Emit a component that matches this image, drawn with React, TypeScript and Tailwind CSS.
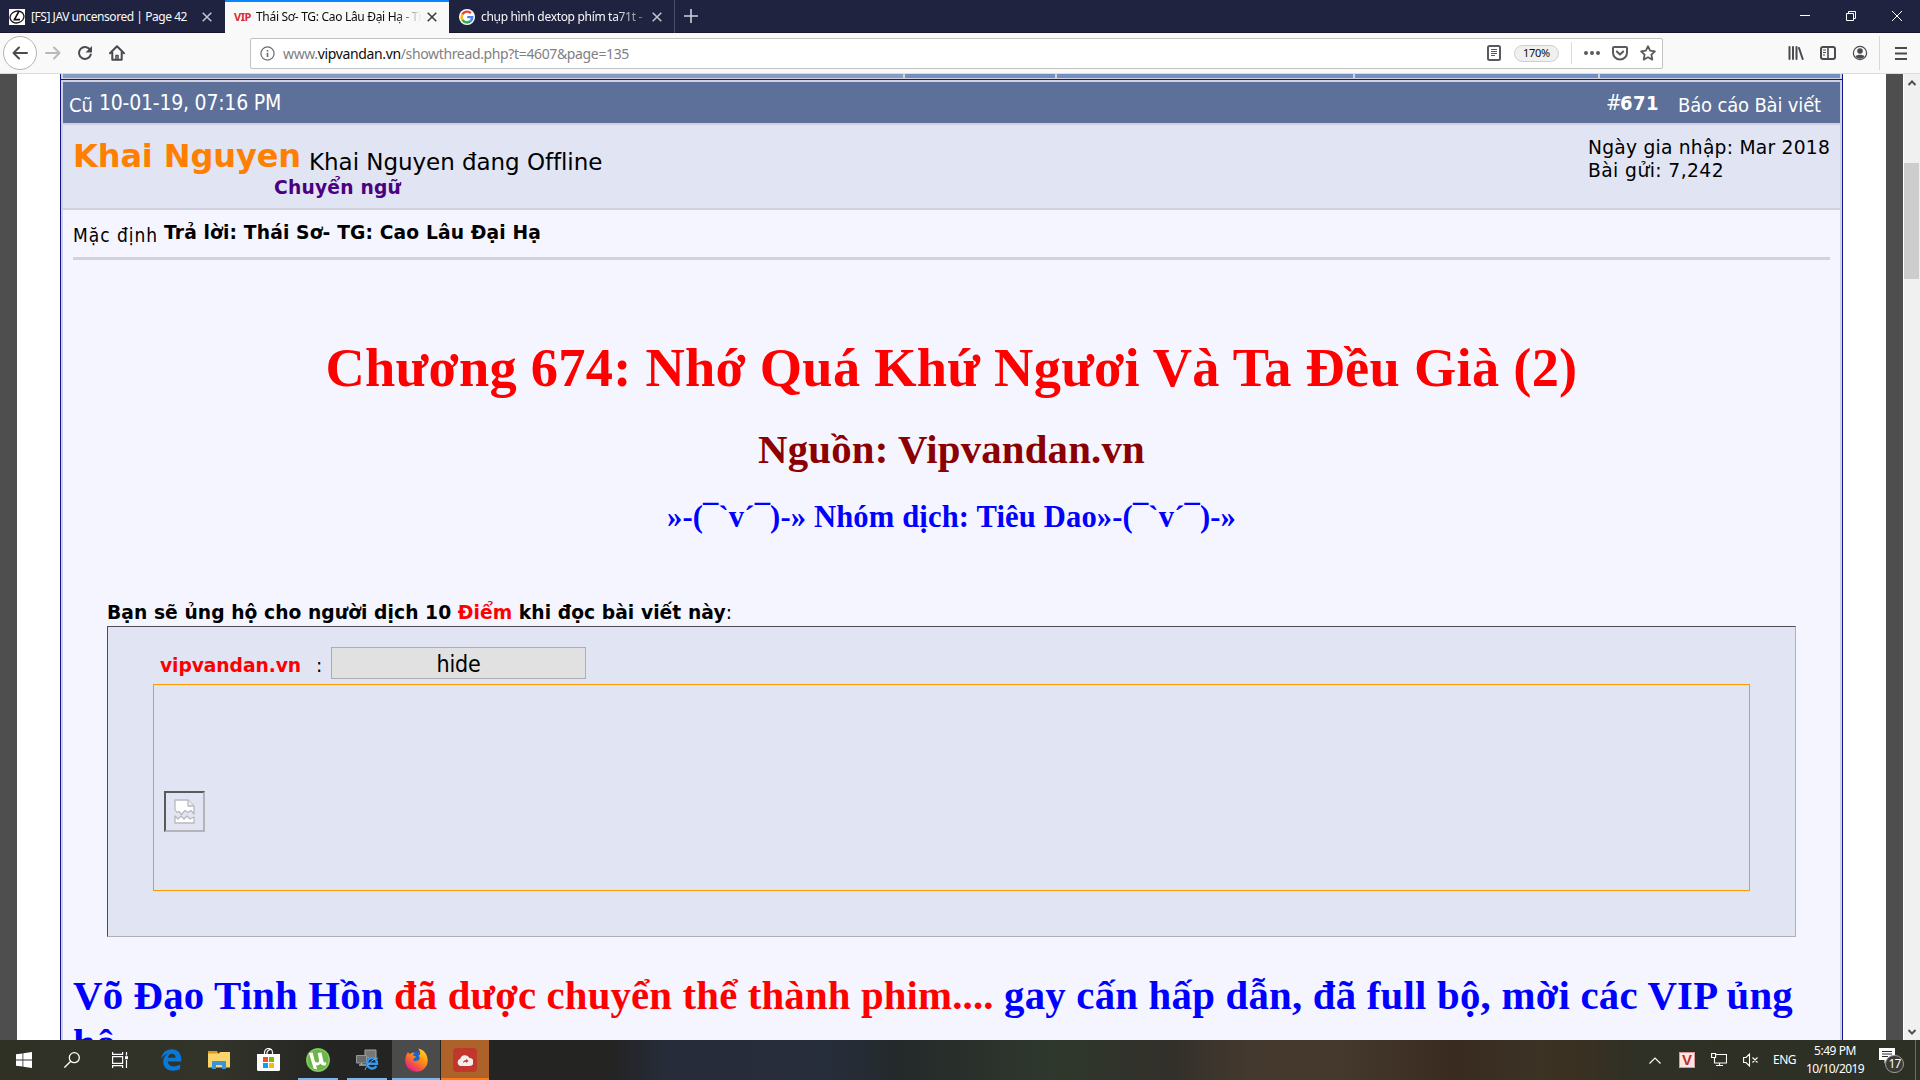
import { useLayoutEffect, useRef } from 'react';
import type { ReactNode } from 'react';

/** Inline text whose letter spacing is tuned so that it spans `w` pixels. */
function T({ w, className = '', children }: { w: number; className?: string; children: ReactNode }) {
  const ref = useRef<HTMLSpanElement>(null);
  useLayoutEffect(() => {
    const el = ref.current;
    if (!el) return;
    el.style.letterSpacing = '0px';
    const natural = el.getBoundingClientRect().width;
    const count = Math.max(1, (el.textContent || '').length);
    el.style.letterSpacing = `${(w - natural) / count}px`;
  }, [w]);
  return (
    <span ref={ref} className={`inline-block shrink-0 whitespace-pre ${className}`}>
      {children}
    </span>
  );
}

const UI = "font-['Noto_Sans','Open_Sans',sans-serif]";
const VERDANA = "font-['DejaVu_Sans',sans-serif]";
const TAHOMA = "font-['DejaVu_Sans_Condensed','DejaVu_Sans',sans-serif] [font-stretch:condensed]";

function Close({ className = '' }: { className?: string }) {
  return (
    <svg className={`h-[10px] w-[10px] shrink-0 ${className}`} viewBox="0 0 10 10" fill="none" stroke="currentColor" strokeWidth="1.5">
      <path d="M.7.7l8.6 8.6M9.3.7L.7 9.3" />
    </svg>
  );
}

function GoogleG() {
  return (
    <svg className="h-4 w-4 shrink-0" viewBox="0 0 16 16">
      <circle cx="8" cy="8" r="8" fill="#fff" />
      <g fill="none" strokeWidth="2.4">
        <path d="M3.4 5.3A5.4 5.4 0 0 1 11.9 4.2" stroke="#ea4335" />
        <path d="M3.4 5.3A5.4 5.4 0 0 0 3.4 10.8" stroke="#fbbc05" />
        <path d="M3.4 10.8A5.4 5.4 0 0 0 11.7 12" stroke="#34a853" />
        <path d="M8.2 8.1H13.3A5.3 5.3 0 0 1 11.6 12" stroke="#4285f4" />
      </g>
    </svg>
  );
}

function TabBar() {
  return (
    <div className={`flex h-[33px] border-b border-[#15172b] bg-[#202340] text-[12px] leading-[16px] text-[#f9f9fa] ${UI}`}>
      <div className="flex h-[33px] w-[225px] items-center pl-[9px]">
        <svg className="h-4 w-4 shrink-0" viewBox="0 0 16 16">
          <rect width="16" height="16" fill="#fff" />
          <ellipse cx="8" cy="8" rx="7" ry="5.9" fill="none" stroke="#111" strokeWidth="1.3" transform="rotate(-15 8 8)" />
          <path d="M9.8 2.5L5.4 10.6H11" fill="none" stroke="#111" strokeWidth="1.6" />
        </svg>
        <T w={156} className="mt-px ml-[6px]">[FS] JAV uncensored | Page 42</T>
        <Close className="ml-[15px] text-[#c5c6d0]" />
      </div>
      <div className="flex h-[33px] w-[224px] items-center border-t-2 border-[#0a84ff] bg-[#f9f9fa] pb-[2px] pl-[9px] text-[#0c0c0d]">
        <T w={17} className="text-[11px] font-bold text-[#d92a2e]">VIP</T>
        <div className="mt-px ml-[5px] w-[166px] overflow-hidden [mask-image:linear-gradient(to_right,black_84%,transparent)]">
          <T w={165}>Thái Sơ- TG: Cao Lâu Đại Hạ - Ti</T>
        </div>
        <Close className="ml-[5px] text-[#38383d]" />
      </div>
      <div className="flex h-[33px] w-[226px] items-center border-r border-[#4b4d66] pl-[10px]">
        <GoogleG />
        <div className="mt-px ml-[6px] w-[164px] [mask-image:linear-gradient(to_right,black_80%,rgba(0,0,0,.35))]">
          <T w={161}>chụp hình dextop phím ta71t -</T>
        </div>
        <Close className="ml-[7px] text-[#c5c6d0]" />
      </div>
      <svg className="mt-[9px] ml-[9px] h-[14px] w-[14px]" viewBox="0 0 14 14" stroke="#d0d1da" strokeWidth="1.6">
        <path d="M7 0v14M0 7h14" />
      </svg>
      <svg className="mt-[10px] mr-[5px] ml-auto h-3 w-[132px]" viewBox="0 0 132 12" fill="none" stroke="#fff" strokeWidth="1">
        <path d="M17 5.500h10M63.500 3.500h7v7h-7zM65.500 3.500v-2h7v7h-2M109 1l10 10M119 1l-10 10" />
      </svg>
    </div>
  );
}

function NavBar() {
  return (
    <div className={`flex h-[41px] items-center border-b border-[#dcdcdd] bg-[#f9f9fa] text-[#4a4a4f] ${UI}`}>
      <div className="ml-[3px] flex h-[34px] w-[34px] items-center justify-center rounded-full border border-[#b4b4b5] bg-white">
        <svg className="h-4 w-4" viewBox="0 0 16 16" fill="none" stroke="currentColor" strokeWidth="2" strokeLinecap="round" strokeLinejoin="round">
          <path d="M15 8H1.500M7 2.500L1.500 8L7 13.500" />
        </svg>
      </div>
      <svg className="ml-[8px] h-4 w-4 text-[#b9b9bb]" viewBox="0 0 16 16" fill="none" stroke="currentColor" strokeWidth="2" strokeLinecap="round" strokeLinejoin="round">
        <path d="M1 8h13.500M9 2.500L14.500 8L9 13.500" />
      </svg>
      <svg className="ml-[16px] h-4 w-4" viewBox="0 0 16 16" fill="none" stroke="currentColor" strokeWidth="2">
        <path d="M13 4.600A6 6 0 1 0 13.800 9.500" strokeLinecap="round" />
        <path d="M15 1v6.500H8.500z" fill="currentColor" stroke="none" />
      </svg>
      <svg className="ml-[16px] h-4 w-4" viewBox="0 0 16 16" fill="none" stroke="currentColor" strokeWidth="2" strokeLinejoin="round" strokeLinecap="round">
        <path d="M1 8.200L8 1.300l7 6.900M3.300 7.500v7.200h9.400V7.500" />
        <path d="M7 14.500v-4h2v4" strokeWidth="1.500" />
      </svg>
      <div className="ml-[125px] flex h-[31px] w-[1413px] items-center rounded-[2px] border border-[#c2c2c3] bg-white pl-[9px]">
        <svg className="h-[15px] w-[15px] shrink-0" viewBox="0 0 15 15" fill="none" stroke="#6b6b6f" strokeWidth="1.200">
          <circle cx="7.500" cy="7.500" r="6.600" />
          <path d="M7.500 6.700v4.300M7.500 4v1.400" strokeWidth="1.600" />
        </svg>
        <T w={346} className="mt-[2px] ml-[8px] text-[14px] leading-[20px] text-[#808084]">
          www.<span className="text-[#0c0c0d]">vipvandan.vn</span>/showthread.php?t=4607&amp;page=135
        </T>
        <svg className="ml-auto h-4 w-[14px] shrink-0" viewBox="0 0 14 16" fill="none" stroke="#5a5a5e">
          <rect x="1" y="1" width="12" height="14" rx="1.500" strokeWidth="2" />
          <path d="M4 4.500h6M4 6.500h6M4 8.500h6M4 10.500h4" />
        </svg>
        <div className="ml-[13px] flex h-[17px] w-[45px] items-center justify-center rounded-full border border-[#cfcfd0] bg-[#f0f0f1] text-[11px] text-[#0c0c0d]">
          <T w={27} className="mt-px">170%</T>
        </div>
        <div className="ml-[12px] h-[22px] w-px bg-[#dadadb]" />
        <svg className="ml-[12px] h-4 w-4 shrink-0" viewBox="0 0 16 16" fill="#5a5a5e">
          <circle cx="2" cy="8" r="2" /><circle cx="8" cy="8" r="2" /><circle cx="14" cy="8" r="2" />
        </svg>
        <svg className="ml-[12px] h-4 w-4 shrink-0" viewBox="0 0 16 16" fill="none" stroke="#5a5a5e" strokeWidth="2" strokeLinecap="round" strokeLinejoin="round">
          <path d="M2 2h12a1 1 0 0 1 1 1v4.500a7 7 0 0 1-14 0V3a1 1 0 0 1 1-1z" />
          <path d="M4.800 6.500L8 9.500l3.200-3" />
        </svg>
        <svg className="mr-[6px] ml-[12px] h-4 w-4 shrink-0" viewBox="0 0 16 16" fill="none" stroke="#5a5a5e" strokeWidth="1.800" strokeLinejoin="round">
          <path d="M8 1.200l2.100 4.400 4.800.7-3.500 3.400.9 4.900L8 12.300l-4.300 2.300.9-4.900L1.100 6.300l4.800-.7z" />
        </svg>
      </div>
      <svg className="ml-[125px] h-4 w-4" viewBox="0 0 16 16" fill="none" stroke="currentColor" strokeWidth="2" strokeLinecap="round">
        <path d="M1.500 2v12M5 2v12M8.500 2v12M11 3l3.700 11" />
      </svg>
      <svg className="ml-[16px] h-4 w-4" viewBox="0 0 16 16" fill="none" stroke="currentColor" strokeWidth="2">
        <rect x="1" y="2" width="14" height="12" rx="2" />
        <path d="M8 2v12" strokeWidth="1.600" />
        <path d="M3 5h3M3 7.500h3M3 10h2" strokeWidth="1" />
      </svg>
      <svg className="ml-[16px] h-4 w-4" viewBox="0 0 16 16">
        <circle cx="8" cy="8" r="6.600" fill="none" stroke="currentColor" strokeWidth="1.200" />
        <circle cx="8" cy="6" r="2.800" fill="currentColor" />
        <path d="M3.500 11.200c2-2 7-2 9 0a5.300 5.300 0 0 1-9 0z" fill="currentColor" />
      </svg>
      <div className="ml-[11px] h-[34px] w-px bg-[#d8d8d9]" />
      <svg className="ml-[15px] h-[13px] w-[12px]" viewBox="0 0 12 13" stroke="currentColor" strokeWidth="2">
        <path d="M0 1h12M0 6.500h12M0 12h12" />
      </svg>
    </div>
  );
}

function PostHeader() {
  return (
    <>
      <div className="flex h-[5px] shrink-0 gap-[2px] border-b border-[#d1d1e1]">
        <div className="w-[840px] bg-[#869cc3]" />
        <div className="w-[150px] bg-[#738fbf]" />
        <div className="w-[296px] bg-[#738fbf]" />
        <div className="w-[243px] bg-[#738fbf]" />
        <div className="flex-1 bg-[#738fbf]" />
      </div>
      <div className="-mx-[2px] h-px shrink-0 bg-[#0b198c]" />
      <div className={`mt-[2px] flex h-[41px] shrink-0 items-start bg-[#5c7099] pl-[6px] text-white ${TAHOMA}`}>
        <T w={24} className="mt-[9px] text-[20px] leading-[28px]">Cũ</T>
        <T w={182} className="mt-[7px] ml-[6px] text-[21px] leading-[28px]">10-01-19, 07:16 PM</T>
        <T w={14} className="mt-[7px] ml-auto text-[21px] leading-[28px]">#</T>
        <T w={39} className={`mt-[7px] text-[20px] leading-[28px] font-bold ${VERDANA}`}>671</T>
        <T w={143} className="mt-[9px] mr-[19px] ml-[19px] text-[20px] leading-[28px]">Báo cáo Bài viết</T>
      </div>
      <div className={`mt-[2px] flex h-[83px] shrink-0 justify-between bg-[#e1e4f2] px-[10px] text-black ${VERDANA}`}>
        <div className="flex flex-col">
          <div className="mt-[11px] flex h-[40px]">
            <T w={228} className="text-[32px] leading-[41px] font-bold text-[#ff8000]">Khai Nguyen</T>
            <T w={293} className="mt-[6px] ml-[8px] text-[23px] leading-[40px]">Khai Nguyen đang Offline</T>
          </div>
          <T w={127} className="ml-[201px] self-start text-[18.700px] leading-[24px] font-bold text-[#4b0082]">Chuyển ngữ</T>
        </div>
        <div className="mt-[11px] flex w-[242px] flex-col text-[18.700px] leading-[23px]">
          <T w={242} className="self-start">Ngày gia nhập: Mar 2018</T>
          <T w={136} className="self-start">Bài gửi: 7,242</T>
        </div>
      </div>
    </>
  );
}

function BrokenImage() {
  return (
    <div className="flex h-[41px] w-[41px] items-center justify-center border-2 border-t-[#5a5a5a] border-r-[#b4b4b8] border-b-[#b4b4b8] border-l-[#5a5a5a]">
      <svg className="h-[25px] w-[21px]" viewBox="0 0 21 25" fill="#fff" stroke="#b9b9bd" strokeWidth="1.300" strokeLinejoin="round">
        <path d="M1 1h13l6 6v8l-3-3.500-3 2-3-2-3.500 4-2.500-3-2 1-2-3z" />
        <path d="M14 1v6h6" fill="#eceef6" />
        <path d="M1 17l3 3 3-3 3 3 3-3 3 3 4-2v6H1z" />
      </svg>
    </div>
  );
}

function Post() {
  return (
    <div className="mt-[2px] flex-1 bg-[#f5f5ff] px-[10px]">
      <div className={`flex h-[47px] items-start text-black ${VERDANA}`}>
        <T w={85} className={`mt-[12px] text-[19px] leading-[27px] ${TAHOMA}`}>Mặc định</T>
        <T w={377} className="mt-[9px] ml-[6px] text-[18.700px] leading-[27px] font-bold">Trả lời: Thái Sơ- TG: Cao Lâu Đại Hạ</T>
      </div>
      <div className="h-[3px] bg-[#d1d1e1]" />
      <div className="mt-[78px] flex flex-col items-center font-['Liberation_Serif',serif] font-bold">
        <T w={1252} className="text-[54.400px] leading-[60px] text-[#ff0000]">Chương 674: Nhớ Quá Khứ Ngươi Và Ta Đều Già (2)</T>
        <T w={387} className="mt-[29px] text-[40.800px] leading-[46px] text-[#8b0000]">Nguồn: Vipvandan.vn</T>
        <T w={569} className="mt-[26px] text-[30.600px] leading-[36px] text-[#0000ff]">»-(¯`v´¯)-» Nhóm dịch: Tiêu Dao»-(¯`v´¯)-»</T>
      </div>
      <div className="mx-[34px] mt-[63px]">
        <div className={`h-[28px] text-[18.700px] leading-[30px] font-bold text-black ${VERDANA}`}>
          <T w={625}>
            Bạn sẽ ủng hộ cho người dịch 10 <span className="text-[#ff0000]">Điểm</span> khi đọc bài viết này<span className="font-normal">:</span>
          </T>
        </div>
        <div className="h-[311px] w-[1689px] border border-t-[#4d4d4f] border-r-[#b0b0b4] border-b-[#b0b0b4] border-l-[#4d4d4f] bg-[#e1e4f2] px-[45px] pt-[20px]">
          <div className={`flex h-[32px] items-center pl-[7px] text-[18.700px] text-black ${VERDANA}`}>
            <T w={141} className="mt-[7px] font-bold text-[#ff0000]">vipvandan.vn</T>
            <T w={6} className="mt-[7px] ml-[15px]">:</T>
            <button className={`ml-[9px] h-[32px] w-[255px] border border-[#adadad] bg-[#e1e1e1] pt-[2px] text-[23px] leading-[28px] ${TAHOMA}`}>
              <T w={44}>hide</T>
            </button>
          </div>
          <div className="mt-[5px] h-[207px] w-[1597px] border border-[#ff9900] pt-[106px] pl-[10px]">
            <BrokenImage />
          </div>
        </div>
      </div>
      <div className="mt-[35px] font-['Liberation_Serif',serif] text-[40.800px] leading-[47px] font-bold text-[#0000ff]">
        <div className="flex h-12">
          <T w={321}>Võ Đạo Tinh Hồn </T>
          <T w={610} className="text-[#ff0000]">đã dược chuyển thể thành phim.... </T>
          <T w={789}>gay cấn hấp dẫn, đã full bộ, mời các VIP ủng</T>
        </div>
        <div>hộ</div>
      </div>
    </div>
  );
}

function Page() {
  return (
    <div className="flex h-[966px] overflow-hidden bg-[#4e4e4e]">
      <div className="ml-[17px] flex w-[1869px] bg-white px-[43px]">
        <div className="flex w-[1783px] flex-col border-x border-[#0b198c] bg-[#d1d1e1] px-[2px]">
          <PostHeader />
          <Post />
        </div>
      </div>
      <div className="ml-[17px] flex w-[17px] flex-col border-l border-white bg-[#f0f0f0]">
        <svg className="h-[17px] w-4" viewBox="0 0 16 17" fill="none" stroke="#505050" strokeWidth="2"><path d="M4.500 11L8 7.500l3.500 3.500" /></svg>
        <div className="mt-[72px] h-[116px] w-[15px] bg-[#cdcdcd]" />
        <svg className="mt-auto h-[17px] w-4" viewBox="0 0 16 17" fill="none" stroke="#505050" strokeWidth="2"><path d="M4.500 7L8 10.500L11.500 7" /></svg>
      </div>
    </div>
  );
}

function TaskCell({ className = '', bar = '', children }: { className?: string; bar?: string; children: ReactNode }) {
  return (
    <div className={`flex h-10 w-12 shrink-0 flex-col items-center ${className}`}>
      <div className="flex h-[38px] items-center pt-[2px]">{children}</div>
      <div className={`h-[2px] ${bar}`} />
    </div>
  );
}

function Taskbar() {
  return (
    <div className={`flex h-10 bg-[linear-gradient(to_right,#2f3125_0px,#32342a_220px,#242423_330px,#242423_610px,#262c3a_670px,#262d3b_830px,#242a2a_900px,#2f382d_1050px,#32302a_1170px,#44392e_1250px,#45382d_1340px,#392b20_1455px,#3b3325_1540px,#3b3022_1570px,#2f3026_1640px,#2d3025_1920px)] text-white ${UI}`}>
      <TaskCell>
        <svg className="h-4 w-4" viewBox="0 0 16 16" fill="#fff"><path d="M0 2.300L6.500 1.400v6.200H0zM7.300 1.300L16 0v7.600H7.300zM0 8.400h6.500v6.200L0 13.700zM7.300 8.400H16V16l-8.700-1.300z" /></svg>
      </TaskCell>
      <TaskCell>
        <svg className="h-4 w-4" viewBox="0 0 16 16" fill="none" stroke="#fff" strokeWidth="1.300"><circle cx="10.300" cy="5.700" r="5" /><path d="M6.700 9.300L.4 15.600" /></svg>
      </TaskCell>
      <TaskCell>
        <svg className="h-4 w-4" viewBox="0 0 16 16" fill="none" stroke="#fff" strokeWidth="1.200"><path d="M.6 0v2.400h10V0M.6 16v-2.400h10V16M.6 4.600h10v6.800H.6zM14.500 0v3.500M14.500 8v8" /><path d="M13 4.200h3v3h-3z" fill="#fff" stroke="none" /></svg>
      </TaskCell>
      <TaskCell className="ml-[3px]">
        <svg className="h-[22px] w-[21px]" viewBox="0 0 21 22" fill="#0a78d7">
          <path d="M.2 9.800C1 3.800 5.300.2 10.600.2c6 0 9.700 4.200 9.700 9.800v2.500H6.900c.2 3.300 2.800 4.900 6 4.900 2.200 0 4.300-.6 6.200-1.800v4.500c-2 1.200-4.500 1.700-7.100 1.700-6 0-9.800-3.600-9.800-9.200 0-3.600 2-6.500 5-8C4.200 5.400 1.700 7.100.2 9.800zM7 8.700h7.600c0-2.400-1.300-3.900-3.700-3.900-2.100 0-3.600 1.700-3.900 3.900z" />
        </svg>
      </TaskCell>
      <TaskCell>
        <svg className="h-[18px] w-[22px]" viewBox="0 0 22 18">
          <path d="M0 0h9l1.500 3H0z" fill="#dd9c12" /><path d="M0 2.500h11l1-1.500h10v15.500H0z" fill="#fbd46b" /><path d="M4 18V11a1 1 0 0 1 1-1h12a1 1 0 0 1 1 1v7h-4v-4H8v4z" fill="#3b94d9" />
        </svg>
      </TaskCell>
      <TaskCell className="ml-px">
        <svg className="-mt-[2px] h-[23px] w-[23px]" viewBox="0 0 23 23">
          <path d="M7.500 6V4.500a4 4 0 0 1 8 0V6M10 6V4.500a4 4 0 0 1 5-3" fill="none" stroke="#fff" strokeWidth="1.200" /><path d="M0 6h23v15.500q0 1.500-1.500 1.500h-20Q0 23 0 21.500z" fill="#fff" />
          <path d="M6 9h5v5H6z" fill="#f25022" /><path d="M12 9h5v5h-5z" fill="#7fba00" /><path d="M6 15h5v5H6z" fill="#00a4ef" /><path d="M12 15h5v5h-5z" fill="#ffb900" />
        </svg>
      </TaskCell>
      <TaskCell className="ml-[2px]" bar="w-10 bg-[#76b9ed]">
        <svg className="h-6 w-6" viewBox="0 0 24 24">
          <circle cx="12" cy="12" r="12" fill="#6db44a" /><circle cx="12" cy="12" r="11" fill="none" stroke="#8fce6d" />
          <path d="M3 5l3.700-.6 2 8.700c.5 2 4.800 2 4.400-.6L11.700 5l3.800-.6 1.900 8.900c.3 1.200 1.200 1.400 3 1.200l-.6 2.800c-2.700.5-4.500 0-5.300-1.700-1 1.700-3 2.200-4.600 1.700l1.300 4-3.500-.5z" fill="#fff" />
        </svg>
      </TaskCell>
      <TaskCell className="ml-px" bar="w-10 bg-[#76b9ed]">
        <svg className="h-[22px] w-[23px]" viewBox="0 0 23 22">
          <path d="M9 1h11v8H9z" fill="#777" stroke="#a5a5a5" /><path d="M.5 6.500h10V14H.5z" fill="#6a6a6a" stroke="#999" /><path d="M3 16h7M5.500 14v2" stroke="#aaa" strokeWidth="1.500" />
          <path d="M11.800 14.800h9.200c.2-4-2.200-5.800-4.800-5.800-2.800 0-5 2-5 5.300 0 5.600 6.800 6.600 9.200 2.800" fill="none" stroke="#3796e6" strokeWidth="2.400" /><path d="M9 21c1-4 7-11 13-12" fill="none" stroke="#5db0f2" />
        </svg>
      </TaskCell>
      <TaskCell className="ml-px bg-[#4b4b4b]" bar="w-12 bg-[#76b9ed]">
        <svg className="h-6 w-[23px]" viewBox="0 0 23 24">
          <defs><linearGradient id="fox" x1=".9" y1="0" x2=".2" y2="1"><stop offset="0" stopColor="#ffe226" /><stop offset=".45" stopColor="#ff8a16" /><stop offset="1" stopColor="#e31587" /></linearGradient></defs>
          <circle cx="11.500" cy="12" r="8.500" fill="#1c63c7" />
          <path d="M3 4c.5 1 1 1.600 1.800 2C6 5 8 4.500 9.500 5c-1 .8-1.500 1.700-1.500 2.600l3 .8c-.2 1.500-2.600 1.700-2.800 3 .8 2 4 2 6 .4 1-1 .3-3.300-.8-4C16.500 7 15 2.500 13 .5c5 .5 9.700 5.500 9.700 12A11.200 11.200 0 0 1 .3 12.500C.2 9 1.500 6 3 4z" fill="url(#fox)" />
        </svg>
      </TaskCell>
      <TaskCell className="ml-px bg-[#ac6229]" bar="w-12 bg-[#ff7a10]">
        <div className="flex h-6 w-6 items-center justify-center rounded-[4px] bg-[#c1372b]">
          <svg className="h-3 w-4" viewBox="0 0 16 12"><path d="M4 12a3.700 3.700 0 0 1-.8-7.200A5 5 0 0 1 12.500 4 4 4 0 0 1 12.500 12z" fill="#f4efee" /><path d="M6 9c.3-2.200 1.500-3 3.200-3V4.800L11.500 7 9.200 9V7.700C8 7.600 7 8 6 9z" fill="#c1372b" /></svg>
        </div>
      </TaskCell>
      <div className="ml-auto flex h-10 items-center">
        <svg className="h-[7px] w-3" viewBox="0 0 12 7" fill="none" stroke="#fff" strokeWidth="1.200"><path d="M.5 6.500L6 1l5.500 5.500" /></svg>
        <div className="ml-[18px] flex h-4 w-4 items-center justify-center border border-[#d99] bg-[#fbe6e4] font-['Liberation_Sans',sans-serif] text-[15px] leading-[14px] font-bold text-[#b5322c]">V</div>
        <svg className="ml-4 h-4 w-4" viewBox="0 0 16 16" fill="none" stroke="#fff" strokeWidth="1.100"><path d="M5 2.500h10.500v8.500H3.500V6M8.500 11v2.500M5 13.500h7M.6 1.500h4v4h-4z" /></svg>
        <svg className="ml-4 h-4 w-4" viewBox="0 0 16 16" fill="none" stroke="#fff" strokeWidth="1.100"><path d="M.6 5.500h2.400L6.500 2v12L3 10.500H.6zM9.500 5.500l5 5M14.500 5.500l-5 5" /></svg>
        <T w={23} className="ml-[14px] text-[12px] leading-[16px]">ENG</T>
        <div className="ml-[10px] flex w-[58px] flex-col items-center text-[12px] leading-[18px]">
          <T w={42}>5:49 PM</T>
          <T w={58}>10/10/2019</T>
        </div>
        <div className="relative ml-[15px] h-6 w-6">
          <svg className="h-4 w-4" viewBox="0 0 16 16"><path d="M0 0h16v12H9l-3.500 3.500V12H0z" fill="#fff" /><path d="M3 3.500h10M3 6h10M3 8.500h6" stroke="#2d3025" /></svg>
          <div className="absolute top-[7px] left-[6px] flex h-[18px] w-[19px] items-center justify-center rounded-full border border-[#9a9a9a] bg-[#3a3b36] text-[12px]">
            <T w={12}>17</T>
          </div>
        </div>
        <div className="ml-[12px] h-10 w-px bg-[#6c6d64]" />
        <div className="w-1" />
      </div>
    </div>
  );
}

export default function App() {
  return (
    <div className="h-[1080px] w-[1920px] overflow-hidden">
      <TabBar />
      <NavBar />
      <Page />
      <Taskbar />
    </div>
  );
}
